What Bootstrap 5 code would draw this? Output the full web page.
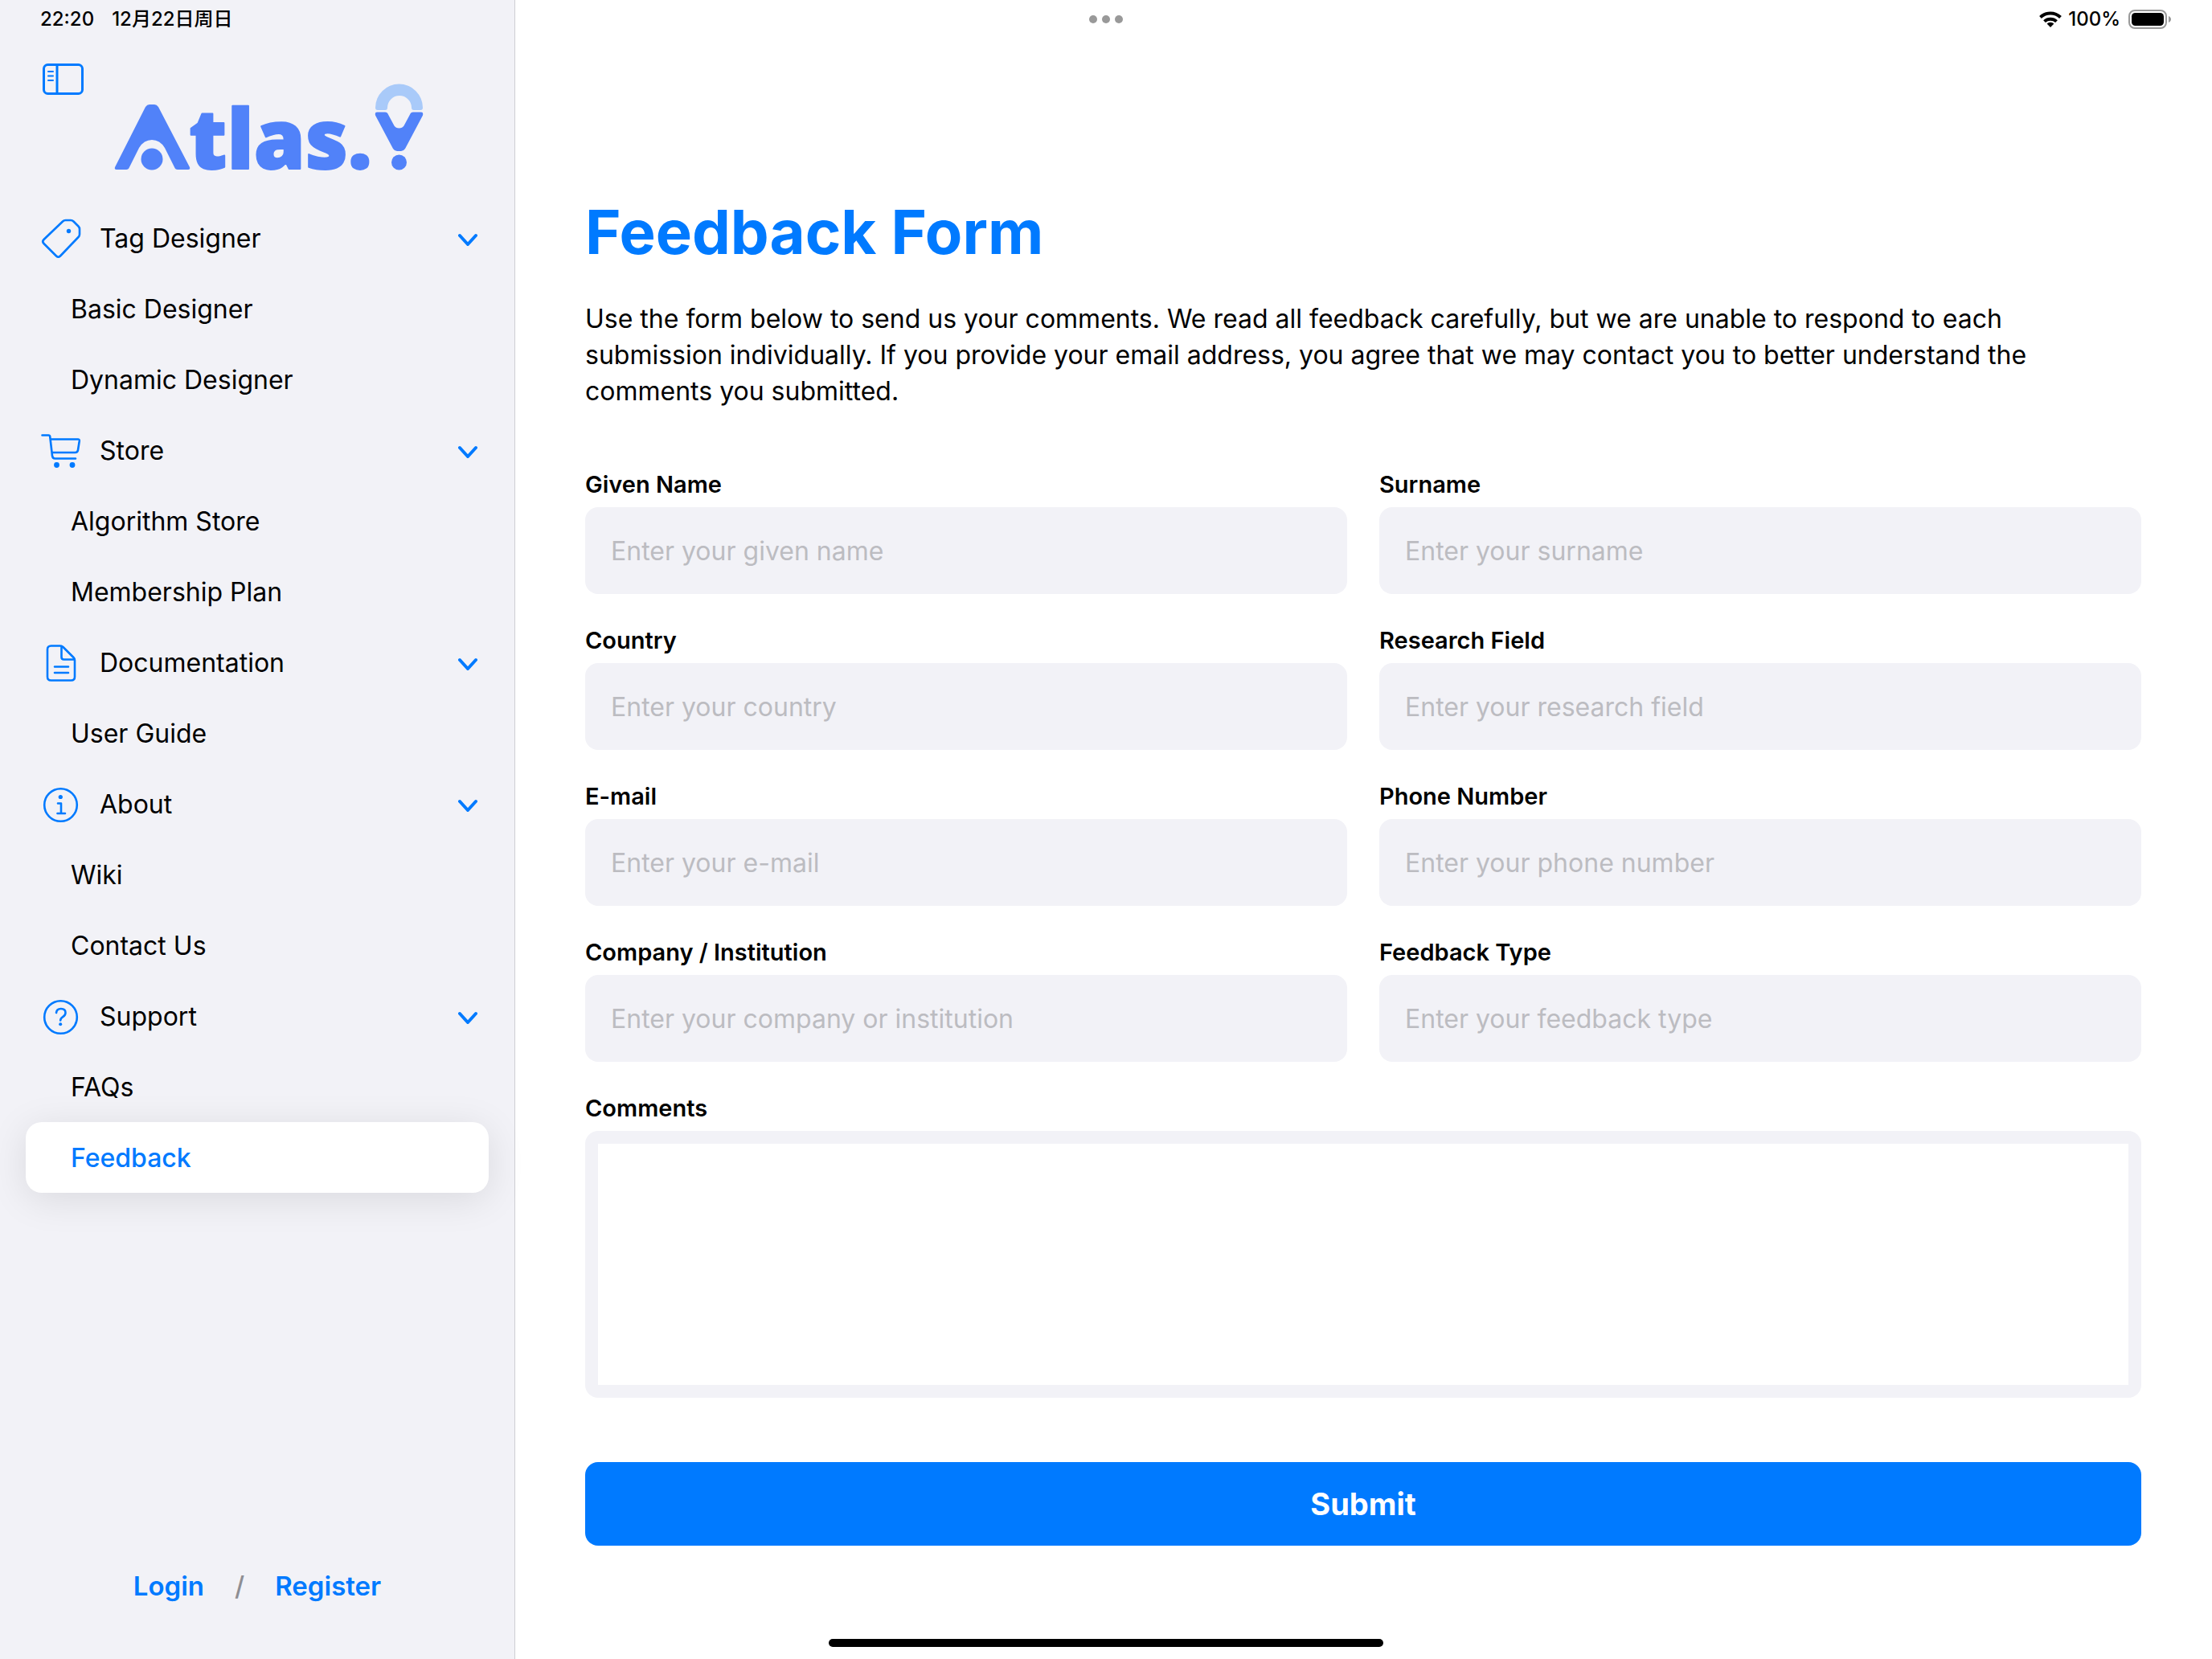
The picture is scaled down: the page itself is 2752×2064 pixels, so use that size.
<!DOCTYPE html>
<html lang="en">
<head>
<meta charset="utf-8">
<meta name="viewport" content="width=device-width, initial-scale=1">
<title>Feedback Form</title>
<link href="https://cdn.jsdelivr.net/npm/bootstrap@5.3.0/dist/css/bootstrap.min.css" rel="stylesheet">
<style>
  :root { --tint: #007aff; --panel: #f2f2f7; --brand: #5182f9; }
  body { font-family: Inter, "Noto Sans CJK SC", sans-serif; font-size: 32px; line-height: 45px; color: #000; background: #fff; }
  a { color: inherit; text-decoration: none; }
  svg { display: block; flex: none; }

  .status-bar { font-size: 24px; line-height: 32px; font-weight: 500; padding: 8px 50px 0 50px; pointer-events: none; }
  .status-bar > div { flex: 1 1 0; }
  .status-time { gap: 22px; }
  .status-dots { gap: 6px; }
  .status-dot { width: 10px; height: 10px; background: #999; }
  .battery-text { margin: 0 10px 0 8px; }
  .home-bar { width: 690px; height: 10px; background: #000; bottom: 15px; }

  .side-panel { width: 641px; background: var(--panel); border-right: 1px solid #cfcfd3; padding: 72px 32px 68px; }
  .panel-toggle { color: var(--tint); padding: 0 18px; }
  .brand-logo { margin: -34px 0 12px 110px; }
  .brand-word { font-family: "Open Sans", sans-serif; font-weight: 800; font-size: 103px; fill: var(--brand); stroke: var(--brand); stroke-width: 2px; stroke-linejoin: round; }
  .menu-row { height: 88px; border-radius: 20px; padding: 1px 14px 0 56px; color: #000; }
  .menu-head { padding-left: 18px; gap: 22px; }
  .menu-head svg { color: var(--tint); }
  .menu-row.active { background: #fff; color: var(--tint); font-weight: 500; box-shadow: 0 8px 48px rgba(0,0,0,.1); }
  .account-links { color: var(--tint); font-size: 33px; font-weight: 600; gap: 38px; }
  .account-links span { color: #8e8e93; font-weight: 500; }

  .main-pane { padding: 242px 88px 140px 87px; }
  .page-title { color: var(--tint); font-size: 76px; line-height: 92px; font-weight: 700; margin-bottom: 40px; }
  .intro { margin-bottom: 76px; }
  .field-grid { --bs-gutter-x: 40px; --bs-gutter-y: 40px; }
  .form-label { font-size: 29px; line-height: 36px; font-weight: 600; margin-bottom: 10px; display: block; }
  .field-box, .field-box:focus { background: var(--panel); border: 0; border-radius: 16px; height: 108px; padding: 0 32px; font-size: 32px; line-height: 44px; color: #000; }
  .field-box::placeholder { color: #bcbcc1; }
  .comment-frame { background: var(--panel); border-radius: 16px; padding: 16px; }
  .comment-box { border: 0; border-radius: 0; height: 300px; font-size: 32px; resize: none; padding: 12px 16px; }
  .send-btn { --bs-btn-bg: #007aff; --bs-btn-hover-bg: #006ae0; margin-top: 80px; height: 104px; border-radius: 16px; border: 0; font-size: 38px; font-weight: 700; }
</style>
</head>
<body>
<div class="d-flex min-vh-100 position-relative">

  <header class="status-bar d-flex align-items-center position-absolute top-0 start-0 w-100">
    <div class="status-time d-flex"><span>22:20</span><span>12月22日周日</span></div>
    <div class="status-dots d-flex justify-content-center">
      <i class="status-dot rounded-circle"></i><i class="status-dot rounded-circle"></i><i class="status-dot rounded-circle"></i>
    </div>
    <div class="d-flex justify-content-end align-items-center">
      <svg width="28" height="20" viewBox="0 0 28 20" fill="none" stroke="#000" stroke-width="4"><path d="M1.5 7.5a18 18 0 0 1 25 0M6.5 12.6a11 11 0 0 1 15 0"/><path d="M14 20l-4.4-4.5a6.300 6.300 0 0 1 8.800 0z" fill="#000" stroke="none"/></svg>
      <span class="battery-text">100%</span>
      <svg width="54" height="24" viewBox="0 0 54 24"><rect x="1" y="1" width="46" height="22" rx="7" fill="none" stroke="#999" stroke-width="2"/><rect x="4" y="4" width="40" height="16" rx="4.500"/><path d="M50 8c4 1.500 4 6.500 0 8z" fill="#999"/></svg>
    </div>
  </header>

  <aside class="side-panel d-flex flex-column flex-shrink-0">
    <button type="button" class="panel-toggle btn border-0 align-self-start" aria-label="Toggle sidebar">
      <svg width="54" height="52" viewBox="0 0 54 52" fill="none" stroke="currentColor" stroke-width="3"><rect x="4.500" y="8.500" width="48" height="36" rx="5"/><path d="M21 8v37"/><path d="M10 17h6M10 22.500h6M10 28h6" stroke-width="2" stroke-linecap="round"/></svg>
    </button>
    <a href="#" class="brand-logo" aria-label="Atlas.Y">
      <svg width="390" height="150" viewBox="142 90 390 150">
        <path fill="#5182f9" d="M181 133q2-3 5-3h6q3 0 5 3L236 208q1 3-2 3h-13q-3 0-4-3L205 184q-6-10-16-10t-16 10L161 208q-1 3-4 3h-12q-3 0-2-3z"/>
        <circle cx="189" cy="198" r="13.500" fill="#5182f9"/>
        <text class="brand-word" x="235" y="210">tlas.</text>
        <path fill="#a9caf9" d="M470 137q-3 0-3-3a29.500 29.500 0 0 1 59 0q0 3-3 3h-8q-3 0-3-3a15 15 0 0 0-30 0q0 3-3 3z"/>
        <path fill="#5182f9" d="M469 139.500h10q3 0 4 3l7.500 14q2 3 6 3t6-3l7.500-14q1-3 4-3h10q3 0 2 4L504 185q-2 3-5 3h-5q-3 0-5-3L467 143.500q-1-4 2-4z"/>
        <circle cx="496.500" cy="202" r="9.500" fill="#5182f9"/>
      </svg>
    </a>
    <nav class="d-flex flex-column" id="side-menu">
      <a href="#" class="menu-row menu-head d-flex align-items-center">
        <svg width="52" height="52" viewBox="0 0 52 52" fill="none" stroke="currentColor" stroke-width="2.600" stroke-linejoin="round"><path d="M28 4.500q1.500-1.500 3.500-1.500H38q2 0 3.500 1.500l6 6q1.500 1.500 1.500 3.500v6.500q0 2-1.500 3.500L25 47.500q-2.500 2.500-5 0L4.500 32q-2.500-2.500 0-5z"/><circle cx="35.500" cy="16.500" r="2.700" fill="currentColor" stroke="none"/></svg>
        <span class="flex-grow-1">Tag Designer</span>
        <svg width="24" height="18" viewBox="0 0 24 18" fill="none" stroke="currentColor" stroke-width="4" stroke-linecap="round" stroke-linejoin="round"><path d="M2 5l10 11L22 5"/></svg>
      </a>
      <a href="#" class="menu-row d-flex align-items-center">Basic Designer</a>
      <a href="#" class="menu-row d-flex align-items-center">Dynamic Designer</a>
      <a href="#" class="menu-row menu-head d-flex align-items-center">
        <svg width="52" height="52" viewBox="0 0 52 52" fill="none" stroke="currentColor" stroke-width="2.600" stroke-linecap="round" stroke-linejoin="round"><path d="M2.500 6.500h8q1.500 0 1.700 1.500L15 32q.4 3.500 3.500 3.500H44M12.500 11.500H47q2 0 1.800 2L47 25q-.5 3-3.500 3H14.500"/><circle cx="20.500" cy="43.500" r="3.400" fill="currentColor" stroke="none"/><circle cx="40" cy="43.500" r="3.400" fill="currentColor" stroke="none"/></svg>
        <span class="flex-grow-1">Store</span>
        <svg width="24" height="18" viewBox="0 0 24 18" fill="none" stroke="currentColor" stroke-width="4" stroke-linecap="round" stroke-linejoin="round"><path d="M2 5l10 11L22 5"/></svg>
      </a>
      <a href="#" class="menu-row d-flex align-items-center">Algorithm Store</a>
      <a href="#" class="menu-row d-flex align-items-center">Membership Plan</a>
      <a href="#" class="menu-row menu-head d-flex align-items-center">
        <svg width="52" height="52" viewBox="0 0 52 52" fill="none" stroke="currentColor" stroke-width="2.600" stroke-linecap="round" stroke-linejoin="round"><path d="M13.500 4.500H25q2 0 3.500 1.500L41.500 19q1.500 1.500 1.500 3.500V43q0 4.500-4.500 4.500h-25Q9 47.500 9 43V9q0-4.500 4.500-4.500z"/><path d="M26.500 5v13.500q0 3 3 3H42.500M18 30.500h17M18 38h17"/></svg>
        <span class="flex-grow-1">Documentation</span>
        <svg width="24" height="18" viewBox="0 0 24 18" fill="none" stroke="currentColor" stroke-width="4" stroke-linecap="round" stroke-linejoin="round"><path d="M2 5l10 11L22 5"/></svg>
      </a>
      <a href="#" class="menu-row d-flex align-items-center">User Guide</a>
      <a href="#" class="menu-row menu-head d-flex align-items-center">
        <svg width="52" height="52" viewBox="0 0 52 52" fill="none" stroke="currentColor" stroke-width="2.600" stroke-linecap="round" stroke-linejoin="round"><circle cx="25.500" cy="26.500" r="20.300"/><path d="M22 24.500h4v12.500M21.500 37h9.500"/><circle cx="25.300" cy="16.500" r="2.600" fill="currentColor" stroke="none"/></svg>
        <span class="flex-grow-1">About</span>
        <svg width="24" height="18" viewBox="0 0 24 18" fill="none" stroke="currentColor" stroke-width="4" stroke-linecap="round" stroke-linejoin="round"><path d="M2 5l10 11L22 5"/></svg>
      </a>
      <a href="#" class="menu-row d-flex align-items-center">Wiki</a>
      <a href="#" class="menu-row d-flex align-items-center">Contact Us</a>
      <a href="#" class="menu-row menu-head d-flex align-items-center">
        <svg width="52" height="52" viewBox="0 0 52 52" fill="none" stroke="currentColor" stroke-width="2.600" stroke-linecap="round" stroke-linejoin="round"><circle cx="25.500" cy="26.500" r="20.300"/><path d="M20 21q.5-5 5.800-5 5.700 0 5.700 5 0 3-3.300 5.200-3 2-3 4.300"/><circle cx="25.200" cy="35.300" r="2" fill="currentColor" stroke="none"/></svg>
        <span class="flex-grow-1">Support</span>
        <svg width="24" height="18" viewBox="0 0 24 18" fill="none" stroke="currentColor" stroke-width="4" stroke-linecap="round" stroke-linejoin="round"><path d="M2 5l10 11L22 5"/></svg>
      </a>
      <a href="#" class="menu-row d-flex align-items-center">FAQs</a>
      <a href="#" class="menu-row active d-flex align-items-center" aria-current="page">Feedback</a>
    </nav>
    <div class="account-links d-flex justify-content-center mt-auto">
      <a href="#">Login</a><span>/</span><a href="#">Register</a>
    </div>
  </aside>

  <main class="main-pane flex-grow-1">
    <h1 class="page-title">Feedback Form</h1>
    <p class="intro">Use the form below to send us your comments. We read all feedback carefully, but we are unable to respond to each submission individually. If you provide your email address, you agree that we may contact you to better understand the comments you submitted.</p>
    <form>
      <div class="row field-grid">
        <div class="col-6"><label class="form-label" for="given">Given Name</label><input class="form-control field-box" id="given" type="text" placeholder="Enter your given name"></div>
        <div class="col-6"><label class="form-label" for="surname">Surname</label><input class="form-control field-box" id="surname" type="text" placeholder="Enter your surname"></div>
        <div class="col-6"><label class="form-label" for="country">Country</label><input class="form-control field-box" id="country" type="text" placeholder="Enter your country"></div>
        <div class="col-6"><label class="form-label" for="research">Research Field</label><input class="form-control field-box" id="research" type="text" placeholder="Enter your research field"></div>
        <div class="col-6"><label class="form-label" for="email">E-mail</label><input class="form-control field-box" id="email" type="email" placeholder="Enter your e-mail"></div>
        <div class="col-6"><label class="form-label" for="phone">Phone Number</label><input class="form-control field-box" id="phone" type="tel" placeholder="Enter your phone number"></div>
        <div class="col-6"><label class="form-label" for="company">Company / Institution</label><input class="form-control field-box" id="company" type="text" placeholder="Enter your company or institution"></div>
        <div class="col-6"><label class="form-label" for="kind">Feedback Type</label><input class="form-control field-box" id="kind" type="text" placeholder="Enter your feedback type"></div>
        <div class="col-12"><label class="form-label" for="comments">Comments</label><div class="comment-frame"><textarea class="form-control comment-box" id="comments"></textarea></div></div>
      </div>
      <button type="submit" class="btn btn-primary send-btn w-100">Submit</button>
    </form>
  </main>

  <div class="home-bar rounded-pill position-absolute start-50 translate-middle-x"></div>
</div>
<script src="https://cdn.jsdelivr.net/npm/bootstrap@5.3.0/dist/js/bootstrap.bundle.min.js"></script>
</body>
</html>
